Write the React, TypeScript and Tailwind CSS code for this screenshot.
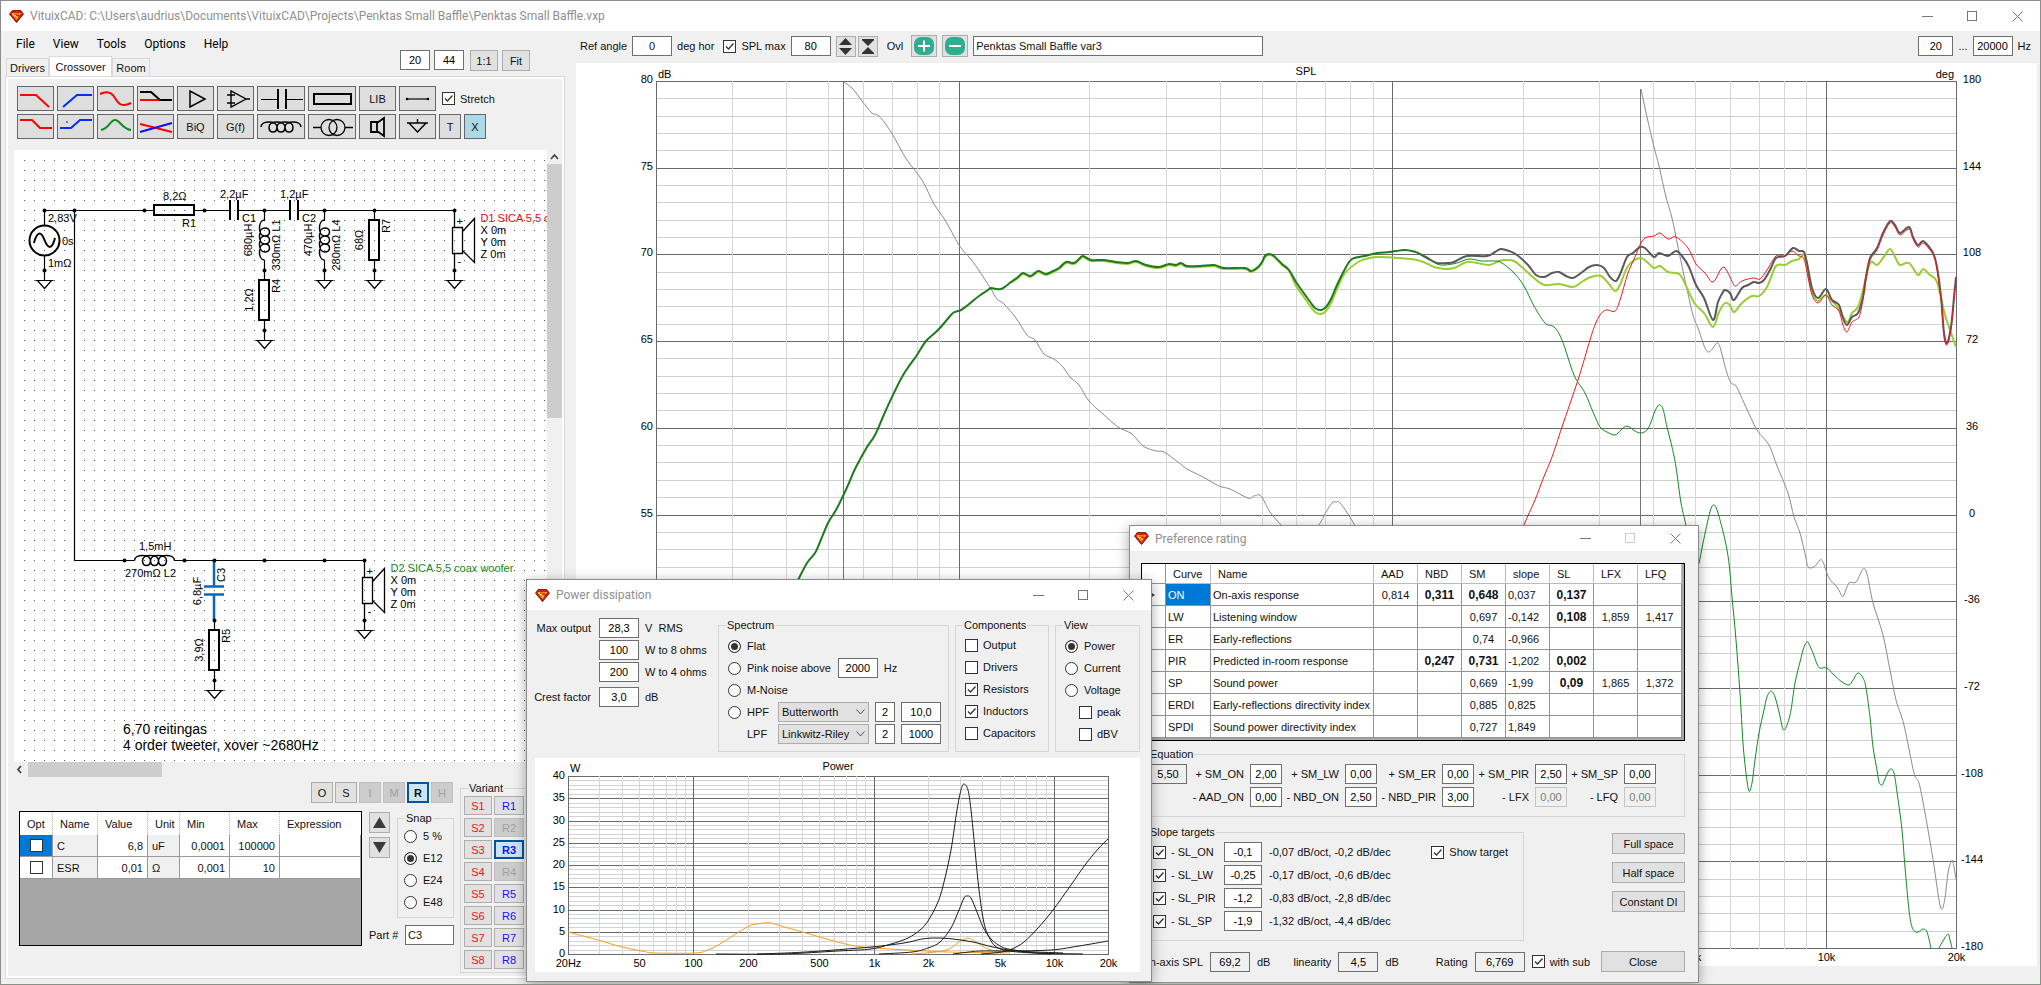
import { useId } from 'react'
import type { ReactNode } from 'react'

type Pt = [number, number]

// "x,y x,y ..." -> list of points
const pts = (s: string): Pt[] => s.trim().split(/\s+/).map((p) => p.split(',').map(Number) as Pt)

// smooth line through all points
function smooth(p: Pt[]) {
  let d = `M${p[0][0]} ${p[0][1]}`
  for (let i = 0; i < p.length - 1; i++) {
    const a = p[i - 1] || p[i]
    const b = p[i]
    const c = p[i + 1]
    const e = p[i + 2] || c
    const x1 = b[0] + (c[0] - a[0]) / 6
    const y1 = b[1] + (c[1] - a[1]) / 6
    const x2 = c[0] - (e[0] - b[0]) / 6
    const y2 = c[1] - (e[1] - b[1]) / 6
    d += `C${x1.toFixed(1)} ${y1.toFixed(1)} ${x2.toFixed(1)} ${y2.toFixed(1)} ${c[0]} ${c[1]}`
  }
  return d
}

const lowBand = pts(`798,580 807,563 815,553 820,542 828,523 836,510 843,496 849,483 855,469 867,447 875,435 886,410
902,377 917,355 926,341 938,330 952,314 955,312 961,310 968,305 979,296 988,290 991,288 996,289 1001,289 1006,286
1011,282 1018,277 1023,273 1030,276 1035,273 1039,271 1046,274 1053,271 1059,268 1066,262 1074,263 1079,259 1083,256
1091,260 1103,260 1116,262 1128,263 1136,261 1146,265 1159,267 1169,264 1176,265 1181,263 1187,266 1200,266 1214,265
1224,268 1245,268 1251,271 1258,267 1262,262 1265,256 1269,254 1274,256 1282,264 1289,270 1296,282 1303,292 1311,303
1315,308 1321,310 1326,307 1331,299 1337,285 1345,269 1352,259`)

const midBand = pts('1365,256 1377,253 1390,252 1405,250 1416,252')

const total = pts(`1416,252 1427,258 1437,263 1447,263 1454,262 1467,256 1487,256 1495,252 1501,249 1509,251 1517,255
1528,265 1536,275 1544,277 1552,273 1559,272 1566,276 1573,278 1581,273 1589,267 1597,265 1604,268 1610,277 1616,281
1621,272 1627,257 1633,253 1640,247 1645,248 1654,257 1659,253 1668,256 1676,251 1682,256 1689,267 1696,285 1704,298
1713,320 1718,302 1723,292 1725,290 1730,293 1734,300 1742,288 1748,285 1754,282 1759,283 1764,280 1770,270 1776,258
1785,256 1793,248 1799,251 1804,252 1807,263 1812,288 1818,298 1826,289 1832,300 1839,305 1843,318 1847,325 1852,317
1858,313 1863,297 1866,277 1870,258 1877,248 1883,233 1890,221 1895,225 1900,233 1909,227 1913,237 1918,245 1923,241
1930,248 1934,255 1937,267 1941,297 1944,333 1947,343 1951,327 1954,297 1956,277`)

const listening = [
  ...lowBand.filter((p) => p[0] > 1010 && p[0] < 1350).map((p): Pt => [p[0], p[1] + (p[0] > 1290 ? 4 : 1)]),
  ...pts(`1360,261 1370,258 1380,257 1417,260 1434,267 1445,269 1454,268 1467,262 1477,263 1489,265 1499,261 1505,260
1514,261 1524,269 1535,279 1545,285 1559,284 1573,287 1583,281 1591,277 1601,276 1609,284 1615,291 1620,285 1628,266
1640,258 1647,262 1654,268 1660,266 1668,272 1676,273 1681,276 1688,290 1695,304 1704,313 1713,327 1719,312 1725,303
1730,305 1734,312 1742,303 1752,296 1759,296 1767,287 1776,266 1785,265 1792,261 1799,259 1804,255 1808,273 1812,292
1818,301 1826,295 1838,308 1847,322 1852,313 1858,307 1863,290 1870,263 1877,265 1883,258 1890,249 1895,257 1900,265
1909,263 1918,275 1923,269 1930,275 1936,280 1940,293 1945,315 1950,330 1956,347`),
]

const woofer = pts(`1416,252 1427,257 1437,264 1445,265 1457,263 1469,259 1482,261 1495,261 1502,263 1514,273 1524,286
1534,306 1545,323 1554,327 1562,340 1574,375 1585,393 1593,412 1600,427 1607,432 1615,435 1621,430 1627,426 1635,431
1641,433 1647,430 1651,422 1655,411 1659,405 1663,409 1667,427 1672,447 1676,467 1681,503 1686,526 1691,560 1695,572
1699,563 1703,543 1710,512 1714,505 1718,513 1725,540 1729,563 1732,597 1736,640 1740,693 1743,743 1746,773 1749,791
1752,783 1755,760 1759,733 1764,710 1767,697 1771,691 1775,697 1779,712 1782,726 1784,730 1787,725 1791,710 1795,683
1800,662 1804,647 1807,642 1809,644 1813,653 1817,664 1820,668 1827,668 1833,674 1842,682 1849,685 1853,680 1858,673
1863,678 1866,688 1870,717 1873,747 1877,770 1879,782 1882,785 1885,779 1888,772 1891,769 1894,773 1897,792 1902,830
1905,867 1909,910 1912,927 1916,932 1920,931 1923,929 1927,932 1931,948`)

const wooferTail = pts('1939,948 1943,941 1948,934 1950,940 1952,948')

const tweeter = [
  ...pts(`1518,544 1524,525 1535,500 1543,479 1552,457 1562,427 1578,380 1590,340 1595,325 1600,315 1606,310 1615,311
1620,300 1628,273 1635,257 1640,245 1645,238 1654,236 1660,233 1668,239 1676,237 1688,248 1696,264 1705,273 1713,282
1721,269 1725,268 1730,277 1735,286 1742,281 1753,278 1760,279 1767,270 1776,256 1785,256 1792,251 1799,256 1804,259
1808,277 1812,295 1818,303 1826,295 1832,305 1839,311 1843,325 1847,332 1852,322 1859,317`),
  ...total.filter((p) => p[0] > 1860).map((p): Pt => [p[0], p[1] + 2]),
]

const phaseA = pts(`844,82 853,89 862,101 872,113 879,116 891,132 907,160 922,180 934,204 945,220 959,245 969,257 978,269
991,289 997,299 1004,304 1016,318 1027,335 1035,340 1044,354 1054,359 1063,367 1070,377 1079,385 1089,401 1103,414
1118,427 1132,434 1143,446 1156,451 1164,452 1178,462 1187,469 1203,477 1219,486 1230,489 1248,498 1254,496 1261,496
1270,512 1282,526 1300,544 1318,526 1326,512 1332,503 1336,502 1341,504 1355,526 1370,560`)

const phaseB = pts(`1641,89 1647,117 1654,147 1659,166 1666,197 1672,218 1678,247 1685,280 1693,315 1698,328 1705,348
1709,352 1713,348 1717,343 1720,347 1726,370 1731,383 1736,386 1745,405 1757,430 1769,445 1777,466 1788,493 1794,517
1800,533 1806,558 1808,567 1814,567 1820,560 1823,562 1829,578 1837,587 1842,596 1844,595 1849,583 1856,582 1863,569
1867,574 1873,603 1883,635 1890,670 1896,700 1904,725 1914,773 1920,787 1932,853 1939,900 1942,909 1945,898 1948,873
1951,862 1953,862 1956,879`)

const powerCurves: { color: string; p: Pt[] }[] = [
  { color: '#ff9a1a', p: pts('568,932 598,940 622,947 642,951 655,953 695,953 708,950 720,944 734,935 749,926 757,924 764,923 771,923 781,926 806,933 830,940 855,946 875,948 908,950 949,952 1010,953') },
  { color: '#ff9a1a', p: pts('912,954 936,952 949,949 959,942 965,939 968,938 973,940 981,945 991,950 1010,952') },
  { color: '#1a1a1a', p: pts('716,954 781,954 838,951 871,949 891,944 908,938 920,930 928,921 938,902 944,882 951,850 957,810 961,790 964,784 968,790 971,810 975,850 979,890 984,923 989,937 995,946 1004,950 1018,952 1051,954') },
  { color: '#1a1a1a', p: pts('879,954 912,952 928,948 940,942 951,928 959,910 964,898 967,896 971,898 977,912 983,927 991,939 1002,947 1014,950 1038,953 1083,954') },
  { color: '#1a1a1a', p: pts('757,954 806,952 871,947 904,943 922,939 936,938 953,939 973,942 993,947 1018,951 1063,953') },
  { color: '#1a1a1a', p: pts('981,954 1002,952 1012,949 1024,942 1038,928 1053,910 1071,885 1085,865 1098,849 1108,839') },
  { color: '#1a1a1a', p: pts('953,954 969,952 981,951 1010,951 1051,950 1079,946 1108,941') },
]

const decades = [20, 30, 40, 50, 60, 70, 80, 90, 100, 200, 300, 400, 500, 600, 700, 800, 900, 1000, 2000, 3000, 4000, 5000, 6000, 7000, 8000, 9000, 10000, 20000]
const major = [20, 100, 1000, 10000, 20000]
const freqLabels: [number, string][] = [[20, '20Hz'], [50, '50'], [100, '100'], [200, '200'], [500, '500'], [1000, '1k'], [2000, '2k'], [5000, '5k'], [10000, '10k'], [20000, '20k']]

function Logo() {
  return (
    <svg viewBox="0 0 16 14" className="h-[13px] w-[15px] shrink-0" aria-hidden="true">
      <path d="M3.5.5h9L15.5 4.5 8 13.5.5 4.5z" fill="#e01b10" stroke="#7a1208" />
      <path d="M3 3.5H13L11.5 5.5H7L8.5 7H10.5L8 10.5 3 4.5z" fill="#ffe23a" />
      <path d="M5 4.5H11M6.5 7 8 9" stroke="#c4160c" strokeWidth="1" fill="none" />
    </svg>
  )
}

function TitleBar({ title, height, pad = 'pl-[8px]', noMax }: { title: string; height: string; pad?: string; noMax?: boolean }) {
  const cell = 'flex h-full w-[45px] items-center justify-center'
  return (
    <div className={`flex items-center bg-white text-[12px] text-[#8f8f8f] ${pad} ${height}`}>
      <Logo />
      <span className="ml-[6px] font-['Roboto',sans-serif] whitespace-nowrap">{title}</span>
      <div className="ml-auto flex h-full">
        <button className={cell} aria-label="Minimize">
          <svg width="11" height="11"><path d="M0 5.5h11" stroke="#777" /></svg>
        </button>
        <button className={cell} aria-label="Maximize">
          <svg width="11" height="11"><rect x=".5" y=".5" width="9" height="9" fill="none" stroke={noMax ? '#ccc' : '#777'} /></svg>
        </button>
        <button className={cell} aria-label="Close window">
          <svg width="11" height="11"><path d="M.5.5l10 10M10.5.5l-10 10" stroke="#777" /></svg>
        </button>
      </div>
    </div>
  )
}

const fieldLook = {
  edit: 'border-[#6e6e6e] bg-white text-black',
  readonly: 'border-[#6e6e6e] bg-[#f0f0f0] text-black',
  off: 'border-[#c4c4c4] bg-[#f0f0f0] text-[#7d7d7d]',
}

function Box({ v, w, label, look = 'edit' }: { v: string; w: string; label: string; look?: keyof typeof fieldLook }) {
  return (
    <input
      defaultValue={v}
      aria-label={label}
      className={`h-[20px] ${w} min-w-0 border text-center outline-none ${fieldLook[look]}`}
    />
  )
}

function Check({ label, on }: { label: string; on?: boolean }) {
  const id = useId()
  return (
    <span className="flex items-center gap-[5px] whitespace-nowrap">
      <span className="relative h-[13px] w-[13px] shrink-0">
        <input id={id} type="checkbox" defaultChecked={on} className="peer block h-[13px] w-[13px] appearance-none border border-[#333] bg-white" />
        <svg viewBox="0 0 13 13" className="pointer-events-none absolute inset-0 hidden peer-checked:block">
          <path d="M3 6.5 5.5 9 10.5 3.5" fill="none" stroke="#333" strokeWidth="1.3" />
        </svg>
      </span>
      <label htmlFor={id}>{label}</label>
    </span>
  )
}

function Radio({ label, name, on }: { label: string; name: string; on?: boolean }) {
  const id = useId()
  return (
    <span className="flex items-center gap-[6px] whitespace-nowrap">
      <input
        id={id}
        type="radio"
        name={name}
        defaultChecked={on}
        className="h-[13px] w-[13px] shrink-0 appearance-none rounded-full border border-[#333] bg-white checked:bg-[#333] checked:shadow-[inset_0_0_0_2px_#fff]"
      />
      <label htmlFor={id}>{label}</label>
    </span>
  )
}

function Group({ title, className, children }: { title: string; className: string; children: ReactNode }) {
  return (
    <fieldset className={`min-w-0 border border-[#d6d6d6] ${className}`}>
      <legend className="ml-[7px] px-[1px] leading-[14px]">{title}</legend>
      {children}
    </fieldset>
  )
}

const btnLook = {
  normal: 'border-[#adadad] bg-[#e1e1e1]',
  off: 'border-[#bfbfbf] bg-[#cccccc] text-[#a0a0a0]',
  active: 'border-2 border-[#00549e] bg-[#cce4f7] font-bold',
}

type Look = keyof typeof btnLook

function Btn({ children, className, look = 'normal' }: { children: ReactNode; className: string; look?: Look }) {
  return <button className={`flex items-center justify-center ${look === 'active' ? '' : 'border'} ${btnLook[look]} ${className}`}>{children}</button>
}

const coil = 'M0 0C0-6.7 16-6.7 16 0C16 6.7 8 6.7 8 0C8-6.7 24-6.7 24 0C24 6.7 16 6.7 16 0C16-6.7 32-6.7 32 0C32 6.7 24 6.7 24 0C24-6.7 40-6.7 40 0'

type Tool = { name: string; w?: string; text?: string; tone?: string; art?: ReactNode }

const toolRows: Tool[][] = [
  [
    { name: 'Low pass', art: <path d="M2 8H18L31 20" stroke="#f00" /> },
    { name: 'High pass', art: <path d="M5 20 19 8H34" stroke="#0030f0" /> },
    { name: 'Phase', art: <path d="M2 7C8 4 13 4 17 11S25 20 33 16" stroke="#f00" /> },
    { name: 'Shelf', art: <><path d="M2 13H21" stroke="#f00" /><path d="M2 5H13L22 13H34" stroke="#000" /></> },
    { name: 'Buffer', art: <path d="M12 4V20L27 12Z" stroke="#000" strokeWidth="1.5" /> },
    { name: 'Opamp', art: <path d="M13 4V20L28 12ZM9 8H17M13 5V11M9 16H17M28 12H32" stroke="#000" strokeWidth="1.4" /> },
    { name: 'Capacitor', w: 'w-[48px]', art: <><path d="M3 12.5H20M28 12.5H45" stroke="#000" strokeWidth="1" /><path d="M20 2V22M28 2V22" stroke="#000" strokeWidth="2" /></> },
    { name: 'Resistor', w: 'w-[48px]', art: <rect x="5" y="7" width="37" height="10" stroke="#000" strokeWidth="2" /> },
    { name: 'Library', text: 'LIB' },
    { name: 'Wire', art: <><path d="M7 12H28" stroke="#000" strokeWidth="1.2" /><circle cx="7" cy="12" r="1.3" fill="#000" /><circle cx="28" cy="12" r="1.3" fill="#000" /></> },
  ],
  [
    { name: 'Low shelf', art: <path d="M2 5H14L22 13H34" stroke="#f00" /> },
    { name: 'High shelf', art: <><path d="M2 13H13L22 5H34" stroke="#0030f0" /><circle cx="9" cy="7" r=".8" fill="#000" /></> },
    { name: 'Peak', art: <path d="M3 15C11 14 12 5 17 5S24 14 33 15" stroke="#118a22" /> },
    { name: 'All pass', art: <><path d="M2 9 34 17" stroke="#f00" /><path d="M2 17 34 8" stroke="#1010f0" /></> },
    { name: 'Biquad', text: 'BiQ' },
    { name: 'Transfer function', text: 'G(f)' },
    { name: 'Inductor', w: 'w-[48px]', art: <path d={coil} transform="translate(3 12)" stroke="#000" strokeWidth="1.5" /> },
    { name: 'Transformer', w: 'w-[48px]', art: <path d="M4 12.5H12M36 12.5H44M12 12.5a8 8 0 1 0 16 0a8 8 0 1 0-16 0M20 12.5a8 8 0 1 0 16 0a8 8 0 1 0-16 0" stroke="#000" strokeWidth="1.3" /> },
    { name: 'Driver', art: <path d="M11 7H17V17H11ZM17 8 24 3V21L17 16" stroke="#000" strokeWidth="1.8" /> },
    { name: 'Ground', art: <path d="M17.5 4V8M7 8H28M9 8 17.5 17 26 8" stroke="#000" strokeWidth="1.4" /> },
    { name: 'Text', w: 'w-[22px]', text: 'T' },
    { name: 'Delete', w: 'w-[22px]', text: 'X', tone: 'bg-[#add8e6]' },
  ],
]

function ToolButton({ t }: { t: Tool }) {
  const vb = t.w === 'w-[48px]' ? '0 0 46 23' : '0 0 35 23'
  return (
    <button aria-label={t.name} className={`flex h-[25px] items-center justify-center border border-[#666] ${t.w || 'w-[37px]'} ${t.tone || 'bg-[#dedede]'}`}>
      {t.text || <svg viewBox={vb} className="h-full w-full" fill="none" strokeWidth="2">{t.art}</svg>}
    </button>
  )
}

function Ground({ x, y }: { x: number; y: number }) {
  return (
    <>
      <path d={`M${x} ${y}v10M${x - 9} ${y + 10}h18M${x - 7} ${y + 10}l7 8l7-8`} fill="none" stroke="#000" strokeWidth="1.2" />
      <circle cx={x} cy={y} r="2" />
    </>
  )
}

function Driver({ x, y, name, color }: { x: number; y: number; name: string; color: string }) {
  return (
    <g transform={`translate(${x} ${y})`}>
      <path d="M0 0V17M0 43V60M-2 17H8V43H-2ZM8 21 20 8V52L8 40" fill="none" stroke="#000" strokeWidth="1.3" />
      <text x="2" y="14">+</text>
      <text x="3" y="54">-</text>
      <text x="26" y="11" fill={color}>{name}</text>
      <text x="26" y="23">X 0m</text>
      <text x="26" y="35">Y 0m</text>
      <text x="26" y="47">Z 0m</text>
      <Ground x={0} y={60} />
    </g>
  )
}

function VText({ x, y, children }: { x: number; y: number; children: string }) {
  return <text transform={`translate(${x} ${y}) rotate(-90)`} textAnchor="middle">{children}</text>
}

const joints = [[44, 210], [74, 210], [144, 210], [204, 210], [264, 210], [324, 210], [374, 210], [454, 210], [264, 270], [124, 560], [184, 560], [214, 560], [264, 560], [324, 560], [364, 560], [214, 620]]

function Schematic() {
  return (
    <svg viewBox="14 150 533 612" className="h-auto min-w-0 flex-1 bg-white font-['Liberation_Sans',sans-serif] text-[11px]">
      <defs>
        <pattern id="dots" x="24" y="160" width="10" height="10" patternUnits="userSpaceOnUse">
          <rect width="1" height="1" fill="#555" />
        </pattern>
      </defs>
      <rect x="24" y="160" width="523" height="602" fill="url(#dots)" />

      <g fill="none" stroke="#000" strokeWidth="1.2">
        <path d="M44.5 225V210.5H154M194 210.5H230M238 210.5H290M298 210.5H454.5M74.5 210.5V560.5H134M174 560.5H364.5" />
        <path d="M264.5 210V221M264.5 260V280M264.5 320V330M324.5 210V221M324.5 260V270M374.5 210V220M374.5 260V270M44.5 256V270M214.5 630V620M214.5 670V680" />
        <path d={coil} transform="translate(264.5 220) rotate(90) scale(1 -1)" strokeWidth="1.5" />
        <path d={coil} transform="translate(324.5 220) rotate(90) scale(1 -1)" strokeWidth="1.5" />
        <path d={coil} transform="translate(134.5 560.5)" strokeWidth="1.5" />
        <circle cx="44.5" cy="240.5" r="15" strokeWidth="2" />
        <path d="M34 243C37 231 41 231 44.5 240S52 250 55 238" strokeWidth="2" />
      </g>
      <g fill="none" stroke="#000" strokeWidth="2">
        <rect x="154" y="205" width="40" height="10" />
        <rect x="259" y="280" width="10" height="40" />
        <rect x="369" y="220" width="10" height="40" />
        <rect x="209" y="630" width="10" height="40" />
        <path d="M230 200V220M238 200V220M290 200V220M298 200V220" />
      </g>
      <path d="M214 561V586M204 586.5H224M204 594.5H224M214 595V620" stroke="#0a63c8" strokeWidth="2.5" fill="none" />
      {joints.map(([x, y]) => (
        <circle key={`${x}-${y}`} cx={x + 0.5} cy={y + 0.5} r="2" />
      ))}
      <Ground x={44.5} y={270.5} />
      <Ground x={264.5} y={330.5} />
      <Ground x={324.5} y={270.5} />
      <Ground x={374.5} y={270.5} />
      <Ground x={214.5} y={680.5} />
      <Driver x={454.5} y={210.5} name="D1 SICA 5,5 coax tweeter" color="#f00" />
      <Driver x={364.5} y={560.5} name="D2 SICA 5,5 coax woofer" color="#118a22" />

      <text x="48" y="222">2,83V</text>
      <text x="62" y="245">0s</text>
      <text x="48" y="267">1mΩ</text>
      <text x="163" y="200">8,2Ω</text>
      <text x="182" y="227">R1</text>
      <text x="220" y="198">2,2µF</text>
      <text x="242" y="222">C1</text>
      <text x="280" y="198">1,2µF</text>
      <text x="302" y="222">C2</text>
      <VText x={252} y={240}>680µH</VText>
      <VText x={280} y={245}>330mΩ L1</VText>
      <VText x={312} y={240}>470µH</VText>
      <VText x={340} y={245}>280mΩ L4</VText>
      <VText x={363} y={240}>68Ω</VText>
      <VText x={390} y={226}>R7</VText>
      <VText x={253} y={300}>1,2Ω</VText>
      <VText x={280} y={286}>R4</VText>
      <text x="139" y="550">1,5mH</text>
      <text x="125" y="577">270mΩ L2</text>
      <VText x={201} y={591}>6,8µF</VText>
      <VText x={225} y={575}>C3</VText>
      <VText x={203} y={650}>3,9Ω</VText>
      <VText x={230} y={636}>R5</VText>
      <text x="123" y="734" className="text-[14px]">6,70 reitingas</text>
      <text x="123" y="750" className="text-[14px]">4 order tweeter, xover ~2680Hz</text>
    </svg>
  )
}

function SplChart() {
  const fx = (f: number) => Math.floor(656.5 + 433.4 * Math.log10(f / 20)) + 0.5
  return (
    <svg viewBox="576 63 1461 903" className="block h-auto w-full bg-white font-['Liberation_Sans',sans-serif] text-[11px]">
      {Array.from({ length: 51 }, (_, i) => {
        const y = Math.round(81 + i * 17.34) + 0.5
        return <path key={i} d={`M656 ${y}H1957`} stroke={i % 5 ? '#ccd3cc' : '#6a6a6a'} />
      })}
      {decades.map((f) => (
        <path key={f} d={`M${fx(f)} 81V949`} stroke={major.includes(f) ? '#6a6a6a' : '#d9d4d9'} />
      ))}
      <g fill="none" stroke="#8a8a8a">
        <path d="M843.5 81V949M1640.5 89V949" stroke="#747474" />
        <path d={smooth(phaseA)} />
        <path d={smooth(phaseB)} />
      </g>
      <g fill="none" strokeLinejoin="round">
        <path d={smooth(listening)} stroke="#9acd32" strokeWidth="2" />
        <path d={smooth(total)} stroke="#5c575c" strokeWidth="2" />
        <path d={smooth([...lowBand, ...midBand])} stroke="#1f7a1f" strokeWidth="2" />
        <path d={smooth(woofer)} stroke="#118a22" />
        <path d={smooth(wooferTail)} stroke="#118a22" />
        <path d={smooth(tweeter)} stroke="#f01818" />
      </g>
      {/* the rest of the left and bottom scale is behind the tool windows */}
      {[80, 75, 70, 65, 60, 55].map((v, i) => (
        <text key={v} x="653" y={83 + i * 86.7} textAnchor="end">{v}</text>
      ))}
      {Array.from({ length: 11 }, (_, i) => (
        <text key={i} x="1972" y={83 + i * 86.7} textAnchor="middle">{180 - i * 36}</text>
      ))}
      <text x="658" y="78">dB</text>
      <text x="1954" y="78" textAnchor="end">deg</text>
      <text x="1306" y="75" textAnchor="middle">SPL</text>
      {freqLabels.slice(-3).map(([f, s]) => (
        <text key={f} x={fx(f)} y="961" textAnchor="middle">{s}</text>
      ))}
    </svg>
  )
}

function PowerChart() {
  const fx = (f: number) => Math.floor(568 + 180.2 * Math.log10(f / 20)) + 0.5
  return (
    <svg viewBox="535 758 605 214" className="block h-auto w-full bg-white font-['Liberation_Sans',sans-serif] text-[11px]">
      {Array.from({ length: 41 }, (_, i) => {
        const y = Math.round(776 + i * 4.45) + 0.5
        return <path key={i} d={`M568 ${y}H1109`} stroke={i % 5 ? '#d0d4d0' : '#6a6a6a'} />
      })}
      {decades.map((f) => (
        <path key={f} d={`M${fx(f)} 776V954`} stroke={major.includes(f) ? '#6a6a6a' : '#d9d4d9'} />
      ))}
      {powerCurves.map((c, i) => (
        <path key={i} d={smooth(c.p)} fill="none" stroke={c.color} />
      ))}
      {Array.from({ length: 9 }, (_, i) => (
        <text key={i} x="565" y={779 + i * 22.25} textAnchor="end">{40 - i * 5}</text>
      ))}
      <text x="570" y="772">W</text>
      <text x="838" y="770" textAnchor="middle">Power</text>
      {freqLabels.map(([f, s]) => (
        <text key={f} x={fx(f)} y="967" textAnchor="middle">{s}</text>
      ))}
    </svg>
  )
}

function PartTable() {
  const head = 'border-r border-dotted border-[#bbb] px-[7px] font-normal'
  const cell = 'border-r border-b border-[#999] px-[4px]'
  const rows = [
    ['C', '6,8', 'uF', '0,0001', '100000'],
    ['ESR', '0,01', 'Ω', '0,001', '10'],
  ]
  return (
    <div className="h-[135px] w-[343px] border border-black bg-[#a6a6a6]">
      <table className="w-full table-fixed border-separate border-spacing-0">
        <colgroup>
          <col className="w-[33px]" /><col className="w-[45px]" /><col className="w-[50px]" /><col className="w-[32px]" />
          <col className="w-[50px]" /><col className="w-[50px]" /><col />
        </colgroup>
        <thead>
          <tr className="h-[23px] bg-white text-left">
            <th className={head}>Opt</th>
            <th className={head}>Name</th>
            <th className={head}>Value</th>
            <th className={head}>Unit</th>
            <th className={head}>Min</th>
            <th className={head}>Max</th>
            <th className="px-[7px] font-normal">Expression</th>
          </tr>
        </thead>
        <tbody>
          {rows.map((r, i) => (
            <tr key={r[0]} className="h-[22px] bg-white">
              <td className={`border-r border-b border-[#999] ${i ? '' : 'bg-[#0078d7]'}`}>
                <input type="checkbox" aria-label={`Optimize ${r[0]}`} className="mx-auto block h-[13px] w-[13px] appearance-none border border-[#333] bg-white" />
              </td>
              <td className={`${cell} bg-[#f0f0f0]`}>{r[0]}</td>
              <td className={`${cell} text-right`}>{r[1]}</td>
              <td className={`${cell} bg-[#f0f0f0]`}>{r[2]}</td>
              <td className={`${cell} text-right`}>{r[3]}</td>
              <td className={`${cell} text-right`}>{r[4]}</td>
              <td className={cell} />
            </tr>
          ))}
        </tbody>
      </table>
    </div>
  )
}

const modes: [string, Look][] = [['O', 'normal'], ['S', 'normal'], ['I', 'off'], ['M', 'off'], ['R', 'active'], ['H', 'off']]

function CrossoverPane() {
  return (
    <div className="flex w-[564px] shrink-0 flex-col">
      <div className="flex justify-between">
        <div>
          <nav className="flex h-[25px] items-center gap-[18px] pl-[15px] font-['Roboto',sans-serif] text-[12px] text-black">
            {['File', 'View', 'Tools', 'Options', 'Help'].map((m) => (
              <button key={m}>{m}</button>
            ))}
          </nav>
          <div className="flex h-[20px] items-end pl-[5px]" role="tablist">
            <button role="tab" className="h-[18px] w-[43px] border border-b-0 border-[#d9d9d9]">Drivers</button>
            <button role="tab" aria-selected="true" className="h-[20px] w-[63px] border border-b-0 border-[#d9d9d9] bg-white">Crossover</button>
            <button role="tab" className="h-[18px] w-[38px] border border-b-0 border-[#d9d9d9]">Room</button>
          </div>
        </div>
        <div className="mt-[19px] mr-[35px] flex gap-[4px]">
          <Box v="20" w="w-[30px]" label="Grid width" />
          <Box v="44" w="w-[30px]" label="Grid height" />
          <Btn className="ml-[2px] h-[21px] w-[28px]">1:1</Btn>
          <Btn className="h-[21px] w-[28px]">Fit</Btn>
        </div>
      </div>

      <div className="ml-[4px] border border-[#d9d9d9] bg-white p-[2px]">
        <div className="bg-[#f0f0f0] pb-[3px]">
          <div className="flex flex-col gap-[3px] pt-[7px] pl-[9px]">
            <div className="flex gap-[3px]">
              {toolRows[0].map((t) => <ToolButton key={t.name} t={t} />)}
              <span className="ml-[3px] flex"><Check label="Stretch" on /></span>
            </div>
            <div className="flex gap-[3px]">
              {toolRows[1].map((t) => <ToolButton key={t.name} t={t} />)}
            </div>
          </div>

          <div className="mt-[11px] ml-[6px] flex">
            <Schematic />
            <div className="flex w-[15px] shrink-0 flex-col">
              <svg viewBox="0 0 15 14" className="h-[14px] w-[15px]"><path d="M4 9 7.5 5 11 9" fill="none" stroke="#444" strokeWidth="1.8" /></svg>
              <div className="h-[254px] bg-[#cdcdcd]" />
            </div>
          </div>
          <div className="ml-[6px] flex h-[15px]">
            <svg viewBox="0 0 14 15" className="h-[15px] w-[14px]"><path d="M7 4 4 7.5 7 11" fill="none" stroke="#444" strokeWidth="1.8" /></svg>
            <div className="w-[134px] bg-[#cdcdcd]" />
          </div>

          <div className="flex gap-[6px] pt-[4px] pl-[11px]">
            <div>
              <div className="flex justify-end gap-[2px] pt-[1px] pr-[1px]">
                {modes.map(([m, look]) => (
                  <Btn key={m} look={look} className="h-[21px] w-[22px]">{m}</Btn>
                ))}
              </div>
              <div className="mt-[8px] flex gap-[7px]">
                <PartTable />
                <div className="flex w-[85px] flex-col">
                  <div className="flex gap-[7px]">
                    <div className="flex flex-col gap-[4px] pt-[1px]">
                      <button aria-label="Move up" className="flex h-[21px] w-[21px] items-center justify-center border border-[#adadad] bg-[#e1e1e1]">
                        <svg width="13" height="11"><path d="M6.5 0 13 11H0z" fill="#3a3a3a" /></svg>
                      </button>
                      <button aria-label="Move down" className="flex h-[21px] w-[21px] items-center justify-center border border-[#adadad] bg-[#e1e1e1]">
                        <svg width="13" height="11"><path d="M0 0H13L6.5 11z" fill="#3a3a3a" /></svg>
                      </button>
                    </div>
                    <Group title="Snap" className="h-[107px] w-[57px]">
                      <div className="flex flex-col gap-[8px] pt-[4px] pl-[6px]">
                        <Radio name="snap" label="5 %" />
                        <Radio name="snap" label="E12" on />
                        <Radio name="snap" label="E24" />
                        <Radio name="snap" label="E48" />
                      </div>
                    </Group>
                  </div>
                  <div className="mt-[7px] flex items-center justify-between whitespace-nowrap">
                    <label htmlFor="part-no">Part #</label>
                    <input id="part-no" defaultValue="C3" className="h-[20px] w-[49px] border border-[#6e6e6e] bg-white px-[2px]" />
                  </div>
                </div>
              </div>
            </div>
            <Group title="Variant" className="h-[192px] w-[72px]">
              <div className="grid grid-cols-[28px_30px] gap-x-[2px] gap-y-[3px] pt-[1px] pl-[3px]">
                {[1, 2, 3, 4, 5, 6, 7, 8].map((n) => {
                  const look: Look = n === 3 ? 'active' : n === 2 || n === 4 ? 'off' : 'normal'
                  return [
                    <Btn key={`s${n}`} className="h-[19px] text-[#f01414]">S{n}</Btn>,
                    <Btn key={`r${n}`} look={look} className={`h-[19px] ${look === 'off' ? '' : 'text-[#1414f0]'}`}>R{n}</Btn>,
                  ]
                })}
              </div>
            </Group>
          </div>
        </div>
      </div>
    </div>
  )
}

function ChartPane() {
  const sq = 'flex items-center justify-center border border-[#adadad] bg-[#e1e1e1]'
  return (
    <div className="flex min-w-0 flex-1 flex-col pr-[3px] pl-[11px]">
      <div className="flex h-[32px] items-center gap-[5px] pr-[6px] pb-[2px] pl-[4px] whitespace-nowrap">
        <label htmlFor="ref-angle">Ref angle</label>
        <input id="ref-angle" defaultValue="0" className="h-[20px] w-[40px] border border-[#6e6e6e] bg-white text-center" />
        <span>deg hor</span>
        <span className="ml-[4px]"><Check label="SPL max" on /></span>
        <Box v="80" w="w-[40px]" label="SPL max value" />
        <button aria-label="Expand range" className={`h-[21px] w-[20px] ${sq}`}>
          <svg width="13" height="17"><path d="M6.5 0 13 7H0zM0 10H13L6.5 17z" fill="#333" /></svg>
        </button>
        <button aria-label="Shrink range" className={`-ml-[3px] h-[21px] w-[20px] ${sq}`}>
          <svg width="12" height="15"><path d="M0 1H12L6 7zM6 8 12 14H0zM0 0H12V1.5H0zM0 13.5H12V15H0z" fill="#333" /></svg>
        </button>
        <span className="ml-[4px]">Ovl</span>
        <button aria-label="Add overlay" className={`ml-[3px] h-[22px] w-[26px] ${sq}`}>
          <svg width="20" height="18"><rect width="20" height="18" rx="7" fill="#2fae8f" /><path d="M10 3.5V14.5M4 9H16" stroke="#fff" strokeWidth="2" /></svg>
        </button>
        <button aria-label="Remove overlay" className={`h-[22px] w-[26px] ${sq}`}>
          <svg width="20" height="18"><rect width="20" height="18" rx="7" fill="#2fae8f" /><path d="M4 9H16" stroke="#fff" strokeWidth="2" /></svg>
        </button>
        <input aria-label="Overlay name" defaultValue="Penktas Small Baffle var3" className="h-[20px] w-[290px] border border-[#6e6e6e] bg-white px-[2px]" />
        <div className="ml-auto flex items-center gap-[5px]">
          <Box v="20" w="w-[35px]" label="Lowest frequency" />
          <span>...</span>
          <Box v="20000" w="w-[40px]" label="Highest frequency" />
          <span>Hz</span>
        </div>
      </div>
      <SplChart />
    </div>
  )
}

function Pick({ label, v }: { label: string; v: string }) {
  return (
    <span className="relative ml-auto">
      <select aria-label={label} defaultValue={v} className="h-[20px] w-[91px] appearance-none border border-[#adadad] bg-[#e1e1e1] pl-[3px]">
        <option>{v}</option>
      </select>
      <svg width="9" height="6" className="pointer-events-none absolute top-[7px] right-[4px]"><path d="M.5.5 4.5 5 8.5.5" fill="none" stroke="#555" /></svg>
    </span>
  )
}

function PowerWindow() {
  const rows: [string, string, string][] = [
    ['Max output', '28,3', 'V  RMS'],
    ['', '100', 'W to 8 ohms'],
    ['', '200', 'W to 4 ohms'],
    ['Crest factor', '3,0', 'dB'],
  ]
  const line = 'flex h-[20px] items-center'
  return (
    <section className="absolute top-[578px] left-[525px] z-20 w-[626px] border border-[#8c8c8c] bg-[#f0f0f0] shadow-[0_3px_12px_rgba(0,0,0,0.35)]">
      <TitleBar title="Power dissipation" height="h-[30px]" />
      <div className="flex justify-between pt-[8px] pr-[11px]">
        <div className="flex flex-col gap-[2px]">
          {rows.map(([a, v, u]) => (
            <div key={v} className={`flex items-center ${u === 'dB' ? 'mt-[3px]' : ''}`}>
              <span className="w-[64px] text-right whitespace-nowrap">{a}</span>
              <span className="mr-[6px] ml-[8px] flex"><Box v={v} w="w-[40px]" label={a || u} /></span>
              <span className="whitespace-pre">{u}</span>
            </div>
          ))}
        </div>
        <div className="flex gap-[6px]">
          <Group title="Spectrum" className="h-[134px] w-[231px]">
            <div className="flex flex-col gap-[2px] pt-[4px] pr-[7px] pl-[9px]">
              <div className={line}><Radio name="spectrum" label="Flat" on /></div>
              <div className={line}>
                <Radio name="spectrum" label="Pink noise above" />
                <span className="mr-[6px] ml-[7px] flex"><Box v="2000" w="w-[40px]" label="Pink noise corner" /></span>Hz
              </div>
              <div className={line}><Radio name="spectrum" label="M-Noise" /></div>
              <div className={`gap-[6px] ${line}`}>
                <Radio name="spectrum" label="HPF" />
                <Pick label="HPF type" v="Butterworth" />
                <Box v="2" w="w-[20px]" label="HPF order" />
                <Box v="10,0" w="w-[40px]" label="HPF frequency" />
              </div>
              <div className={`gap-[6px] pl-[19px] ${line}`}>
                LPF
                <Pick label="LPF type" v="Linkwitz-Riley" />
                <Box v="2" w="w-[20px]" label="LPF order" />
                <Box v="1000" w="w-[40px]" label="LPF frequency" />
              </div>
            </div>
          </Group>
          <Group title="Components" className="h-[134px] w-[94px]">
            <div className="flex flex-col gap-[2px] pt-[3px] pl-[9px]">
              <div className={line}><Check label="Output" /></div>
              <div className={line}><Check label="Drivers" /></div>
              <div className={line}><Check label="Resistors" on /></div>
              <div className={line}><Check label="Inductors" on /></div>
              <div className={line}><Check label="Capacitors" /></div>
            </div>
          </Group>
          <Group title="View" className="h-[134px] w-[85px]">
            <div className="flex flex-col gap-[2px] pt-[4px] pl-[9px]">
              <div className={line}><Radio name="view" label="Power" on /></div>
              <div className={line}><Radio name="view" label="Current" /></div>
              <div className={line}><Radio name="view" label="Voltage" /></div>
              <div className={`pl-[14px] ${line}`}><Check label="peak" /></div>
              <div className={`pl-[14px] ${line}`}><Check label="dBV" /></div>
            </div>
          </Group>
        </div>
      </div>
      <div className="pt-[6px] pr-[11px] pb-[9px] pl-[8px]"><PowerChart /></div>
    </section>
  )
}

const ratings: { curve: string; name: string; v: string[]; bold?: number[] }[] = [
  { curve: 'ON', name: 'On-axis response', v: ['0,814', '0,311', '0,648', '0,037', '0,137', '', ''], bold: [1, 2, 4] },
  { curve: 'LW', name: 'Listening window', v: ['', '', '0,697', '-0,142', '0,108', '1,859', '1,417'], bold: [4] },
  { curve: 'ER', name: 'Early-reflections', v: ['', '', '0,74', '-0,966', '', '', ''] },
  { curve: 'PIR', name: 'Predicted in-room response', v: ['', '0,247', '0,731', '-1,202', '0,002', '', ''], bold: [1, 2, 4] },
  { curve: 'SP', name: 'Sound power', v: ['', '', '0,669', '-1,99', '0,09', '1,865', '1,372'], bold: [4] },
  { curve: 'ERDI', name: 'Early-reflections directivity index', v: ['', '', '0,885', '0,825', '', '', ''] },
  { curve: 'SPDI', name: 'Sound power directivity index', v: ['', '', '0,727', '1,849', '', '', ''] },
]

const terms: [string, string][][] = [
  [['+ SM_ON', '2,00'], ['+ SM_LW', '0,00'], ['+ SM_ER', '0,00'], ['+ SM_PIR', '2,50'], ['+ SM_SP', '0,00']],
  [['- AAD_ON', '0,00'], ['- NBD_ON', '2,50'], ['- NBD_PIR', '3,00'], ['- LFX', '0,00'], ['- LFQ', '0,00']],
]

const slopes = [
  ['- SL_ON', '-0,1', '-0,07 dB/oct, -0,2 dB/dec'],
  ['- SL_LW', '-0,25', '-0,17 dB/oct, -0,6 dB/dec'],
  ['- SL_PIR', '-1,2', '-0,83 dB/oct, -2,8 dB/dec'],
  ['- SL_SP', '-1,9', '-1,32 dB/oct, -4,4 dB/dec'],
]

function RatingWindow() {
  const th = 'border-r border-b border-[#bbb] px-[7px] text-left font-normal'
  const td = 'border-r border-b border-[#8f958f] px-[2px] whitespace-nowrap'
  return (
    <section className="absolute top-[524px] left-[1128px] z-10 w-[570px] border border-[#8c8c8c] bg-[#f0f0f0] shadow-[0_3px_12px_rgba(0,0,0,0.35)]">
      <TitleBar title="Preference rating" height="h-[25px]" pad="pl-[4px]" noMax />
      <div className="pt-[12px] pr-[13px] pb-[10px] pl-[11px]">
        <div className="border border-black bg-[#a6a6a6] pr-[2px] pb-[2px]">
          <table className="w-full table-fixed border-separate border-spacing-0 bg-white">
            <colgroup>
              <col className="w-[24px]" /><col className="w-[45px]" /><col />
              {[0, 1, 2, 3, 4, 5, 6].map((n) => <col key={n} className="w-[44px]" />)}
            </colgroup>
            <thead>
              <tr className="h-[20px]">
                <th className="border-r border-b border-[#8f958f]" />
                {['Curve', 'Name', 'AAD', 'NBD', 'SM', 'slope', 'SL', 'LFX', 'LFQ'].map((h) => (
                  <th key={h} className={th}>{h}</th>
                ))}
              </tr>
            </thead>
            <tbody>
              {ratings.map((r, i) => (
                <tr key={r.curve} className="h-[22px]">
                  <td className={td}>
                    {i === 0 && <svg width="5" height="6" className="ml-[6px]"><path d="M0 0 5 3 0 6z" fill="#333" /></svg>}
                  </td>
                  <td className={`${td} ${i === 0 ? 'bg-[#0078d7] text-white' : ''}`}>{r.curve}</td>
                  <td className={td}>{r.name}</td>
                  {r.v.map((v, k) => (
                    <td key={k} className={`${td} ${k === 3 ? '' : 'text-center'} ${r.bold?.includes(k) ? 'text-[12px] font-bold' : ''}`}>{v}</td>
                  ))}
                </tr>
              ))}
            </tbody>
          </table>
        </div>

        <Group title="Equation" className="mt-[6px] h-[70px]">
          <div className="grid grid-cols-[38px_51px_32px_51px_32px_53px_32px_49px_32px_45px_32px] gap-x-[6px] gap-y-[3px] pt-[3px] pl-[7px]">
            {terms.map((row, i) => [
              i === 0 ? <Box key="c" v="5,50" w="w-[38px]" label="Constant" look="readonly" /> : <span key="c" />,
              ...row.map(([name, v]) => [
                <span key={name} className="flex items-center justify-end whitespace-nowrap">{name}</span>,
                <Box key={`${name}v`} v={v} w="w-[32px]" label={name} look={name.includes('LF') ? 'off' : 'edit'} />,
              ]),
            ])}
          </div>
        </Group>

        <div className="mt-[8px] flex justify-between">
          <Group title="Slope targets" className="h-[116px] w-[383px]">
            <div className="flex justify-between pt-[3px] pr-[15px] pl-[11px]">
              <div className="flex flex-col gap-[3px]">
                {slopes.map(([name, v, text]) => (
                  <div key={name} className="flex items-center">
                    <span className="w-[71px]"><Check label={name} on /></span>
                    <Box v={v} w="w-[38px]" label={`${name} target`} />
                    <span className="ml-[7px] whitespace-nowrap">{text}</span>
                  </div>
                ))}
              </div>
              <div className="flex h-[20px]"><Check label="Show target" on /></div>
            </div>
          </Group>
          <div className="flex flex-col gap-[8px] pt-[8px]">
            <Btn className="h-[21px] w-[73px]">Full space</Btn>
            <Btn className="h-[21px] w-[73px]">Half space</Btn>
            <Btn className="h-[21px] w-[73px]">Constant DI</Btn>
          </div>
        </div>

        <div className="mt-[10px] flex items-center gap-[7px] whitespace-nowrap">
          <span className="w-[62px] text-right">On-axis SPL</span>
          <Box v="69,2" w="w-[40px]" label="On-axis SPL" look="readonly" />
          dB
          <span className="ml-[16px]">linearity</span>
          <Box v="4,5" w="w-[40px]" label="Linearity" look="readonly" />
          dB
          <span className="ml-[30px]">Rating</span>
          <Box v="6,769" w="w-[50px]" label="Rating" look="readonly" />
          <Check label="with sub" on />
          <Btn className="ml-auto h-[21px] w-[84px]">Close</Btn>
        </div>
      </div>
    </section>
  )
}

export default function App() {
  return (
    <main className="relative flex min-h-screen flex-col overflow-hidden border border-[#8a8f8a] bg-[#f0f0f0] font-['Liberation_Sans',Arial,sans-serif] text-[11px] leading-[14px] text-[#111]">
      <TitleBar title="VituixCAD: C:\Users\audrius\Documents\VituixCAD\Projects\Penktas Small Baffle\Penktas Small Baffle.vxp" height="h-[30px]" />
      <div className="flex">
        <CrossoverPane />
        <ChartPane />
      </div>
      <PowerWindow />
      <RatingWindow />
    </main>
  )
}
